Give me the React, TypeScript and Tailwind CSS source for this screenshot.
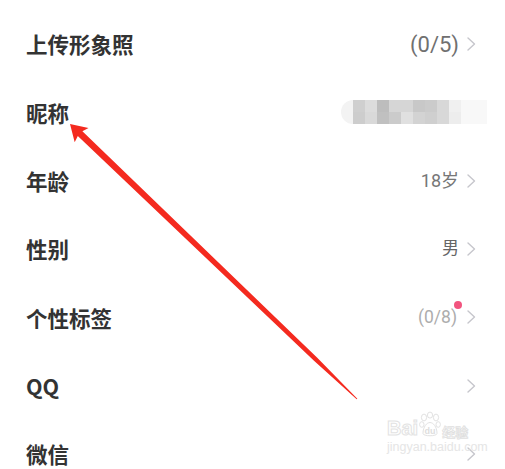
import React from 'react';

const Chevron = () => (
    <svg width="10" height="16" viewBox="0 0 10 16" className="shrink-0">
        <path d="M2 2 L8.5 8 L2 14" fill="none" stroke="#c6c6cc" strokeWidth="1.4" strokeLinecap="round" strokeLinejoin="round" />
    </svg>
);

// pixelated nickname (two rows of blocks)
const blurTop = ['#cfcfcf', '#dcdcdc', '#bdbdbd', '#d6d6d6', '#d6d6d6', '#c8c8c8', '#cbcbcb', '#d8d8d8', '#f0f0f0', '#f8f8f8'];
const blurBottom = ['#cdcdcd', '#d9d9d9', '#c0c0c0', '#cbcbcb', '#e0e0e0', '#d3d3d3', '#cfcfcf', '#d8d8d8', '#ededed', '#f8f8f8'];

const Blurred = () => (
    <div className="flex h-[24px] -mr-[11px]">
        <div className="w-[12px] rounded-l-full bg-[#f3f3f3]" />
        <div className="grid grid-cols-[repeat(9,12px)_26px] grid-rows-2">
            {blurTop.map((c, i) => (
                <div key={'t' + i} style={{ background: c }} />
            ))}
            {blurBottom.map((c, i) => (
                <div key={'b' + i} style={{ background: c }} />
            ))}
        </div>
    </div>
);

type Row = { label: string; value?: React.ReactNode };

const valueFont = { fontFamily: 'Roboto, "Noto Sans CJK SC", sans-serif' };

const rows: Row[] = [
    { label: '上传形象照', value: <span className="text-[22px] text-[#707070]" style={valueFont}>(0/5)</span> },
    { label: '昵称' },
    { label: '年龄', value: <span className="text-[18px] text-[#777]" style={valueFont}>18岁</span> },
    { label: '性别', value: <span className="text-[17px] text-[#666]" style={valueFont}>男</span> },
    {
        label: '个性标签',
        value: (
            <span className="relative mr-[2px] text-[17.5px] text-[#adadad]" style={valueFont}>
                (0/8)
                <span className="absolute -top-[3px] -right-[5px] w-[8px] h-[8px] rounded-full bg-[#f2557f]" />
            </span>
        ),
    },
    { label: 'QQ' },
    { label: '微信' },
];

const App = () => {
    return (
        <div
            className="relative w-[505px] h-[469px] overflow-hidden bg-white pt-[10px]"
            style={{ fontFamily: '"Noto Sans CJK SC", "Noto Sans", sans-serif' }}
        >
            {rows.map((r) => (
                <div key={r.label} className="flex items-center justify-between h-[68.3px] pl-[26px] pr-[29px]">
                    <span className="text-[21.5px] font-bold text-[#333] leading-none">{r.label}</span>
                    {r.label === '昵称' ? (
                        <Blurred />
                    ) : (
                        <div className="flex items-center gap-[7px]">
                            {r.value}
                            <Chevron />
                        </div>
                    )}
                </div>
            ))}

            {/* baidu jingyan watermark */}
            <div className="absolute left-[387px] top-[411px] flex flex-col items-start opacity-80">
                <div className="flex items-end">
                    <span className="text-[20px] font-bold leading-none text-transparent [-webkit-text-stroke:1px_#dcdcdc]" style={{ fontFamily: '"Liberation Sans", sans-serif' }}>
                        Bai
                    </span>
                    <svg width="22" height="27" viewBox="0 0 22 26" className="mx-[1px]">
                        <g fill="none" stroke="#dcdcdc" strokeWidth="1">
                            <ellipse cx="5" cy="6" rx="2.6" ry="3.4" />
                            <ellipse cx="11" cy="3.6" rx="2.6" ry="3" />
                            <ellipse cx="17" cy="6" rx="2.6" ry="3.4" />
                            <ellipse cx="2.8" cy="13" rx="2.2" ry="2.8" />
                            <ellipse cx="19.2" cy="13" rx="2.2" ry="2.8" />
                            <path d="M4 22 C4 15 8 11 11 11 C14 11 18 15 18 22 C18 25 4 25 4 22 Z" />
                        </g>
                        <text x="11" y="22" textAnchor="middle" fontSize="9" fill="#d6d6d6" fontFamily="Liberation Sans, sans-serif" fontWeight="bold">du</text>
                    </svg>
                    <span className="text-[13px] font-bold leading-none text-transparent [-webkit-text-stroke:0.8px_#d8d8d8]">经验</span>
                </div>
                <span className="mt-[3px] text-[12.5px] leading-none text-[#e0e0e0]" style={{ fontFamily: '"Liberation Sans", sans-serif' }}>
                    jingyan.baidu.com
                </span>
            </div>

            {/* red annotation arrow */}
            <svg className="absolute inset-0 pointer-events-none" width="505" height="469" viewBox="0 0 505 469">
                <polygon
                    fill="#f42a1f"
                    points="70,124 88.5,127.9 82.4,131.3 317,357.6 357.35,398.64 356.65,399.36 314,360.8 77.8,136.1 74.7,142.3"
                />
            </svg>
        </div>
    );
};

export default App;
